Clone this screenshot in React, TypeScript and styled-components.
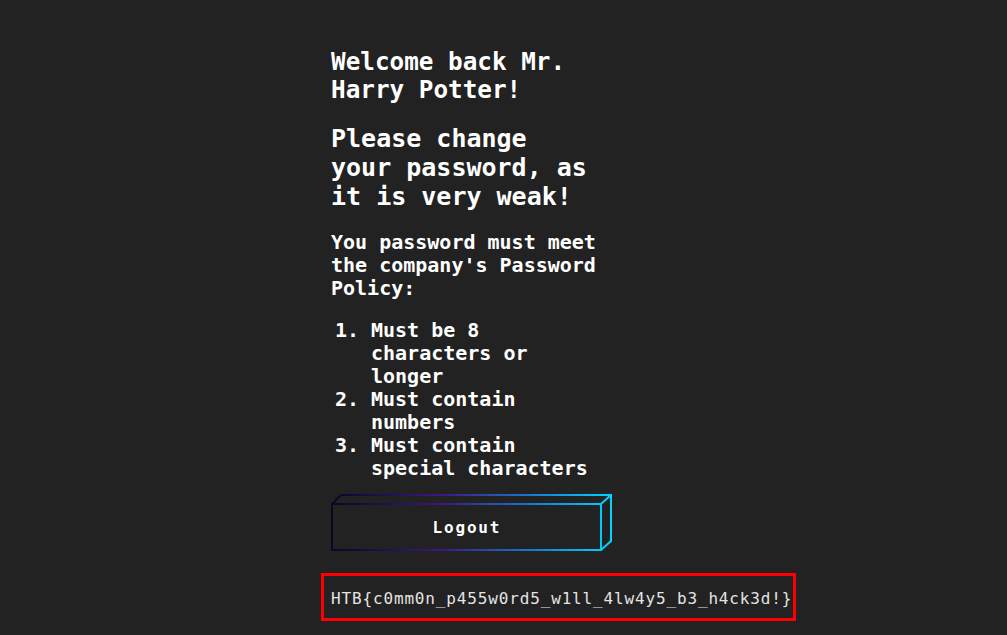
import React from "react";
import styled, { createGlobalStyle } from "styled-components";

const GlobalStyle = createGlobalStyle`
  html, body {
    margin: 0;
    padding: 0;
    background: #222222;
  }
  body {
    font-family: "DejaVu Sans Mono", "Liberation Mono", monospace;
    color: #ffffff;
  }
`;

const Page = styled.main`
  min-height: 635px;
  box-sizing: border-box;
  padding: 48px 0 0 331px;
`;

const Column = styled.section`
  width: 270px;
  display: flex;
  flex-direction: column;
  align-items: flex-start;
`;

const Title = styled.h1`
  margin: 0;
  font-size: 24.3px;
  line-height: 28px;
  font-weight: bold;
`;

const Subtitle = styled.h2`
  margin: 20px 0 0;
  font-size: 25px;
  line-height: 29px;
  font-weight: bold;
`;

const Text = styled.p`
  margin: 20px 0 0;
  font-size: 20px;
  line-height: 23px;
  font-weight: bold;
`;

const Rules = styled.ol`
  margin: 19px 0 0;
  padding: 0 0 0 40px;
  font-size: 20px;
  line-height: 23px;
  font-weight: bold;
`;

const Rule = styled.li``;

const LogoutButton = styled.button`
  position: relative;
  margin-top: 14px;
  width: 281px;
  height: 57px;
  padding: 10px 11px 0 0;
  background: transparent;
  border: none;
  cursor: pointer;
  display: flex;
  flex-direction: column;
`;

const Outline = styled.svg`
  position: absolute;
  inset: 0;
  width: 281px;
  height: 57px;
  overflow: visible;
`;

const Label = styled.span`
  position: relative;
  flex: 1;
  display: flex;
  align-items: center;
  justify-content: center;
  font-family: "DejaVu Sans Mono", monospace;
  font-weight: bold;
  font-size: 16px;
  letter-spacing: 1.8px;
  color: #ffffff;
  padding-left: 1.8px;
`;

const Flag = styled.div`
  margin: 22px 0 0 -10px;
  box-sizing: border-box;
  width: 475px;
  height: 48px;
  border: 3px solid #ff0000;
  padding: 2px 0 0 7px;
  display: flex;
  align-items: center;
  white-space: nowrap;
  font-family: "DejaVu Sans Mono", monospace;
  font-size: 16px;
  letter-spacing: 0.85px;
  color: #e4e4e4;
`;

function ButtonOutline() {
  return (
    <Outline viewBox="0 0 281 57" aria-hidden="true">
      <defs>
        <linearGradient id="btnGrad" x1="0" y1="0" x2="281" y2="0" gradientUnits="userSpaceOnUse">
          <stop offset="0" stopColor="#0a0624" />
          <stop offset="0.4" stopColor="#3a1a82" />
          <stop offset="0.7" stopColor="#1c74cc" />
          <stop offset="1" stopColor="#00d6ff" />
        </linearGradient>
      </defs>
      <g fill="none" stroke="url(#btnGrad)" strokeWidth="2" strokeLinejoin="miter">
        <rect x="1" y="10" width="269" height="46" />
        <polyline points="1,10 10,1 280,1 280,47 270,56" />
        <line x1="270" y1="10" x2="280" y2="1" />
      </g>
    </Outline>
  );
}

export default function App() {
  return (
    <>
      <GlobalStyle />
      <Page>
        <Column>
          <Title>Welcome back Mr. Harry Potter!</Title>
          <Subtitle>Please change your password, as it is very weak!</Subtitle>
          <Text>You password must meet the company's Password Policy:</Text>
          <Rules>
            <Rule>Must be 8 characters or longer</Rule>
            <Rule>Must contain numbers</Rule>
            <Rule>Must contain special characters</Rule>
          </Rules>
          <LogoutButton type="button">
            <ButtonOutline />
            <Label>Logout</Label>
          </LogoutButton>
          <Flag>HTB{"{"}c0mm0n_p455w0rd5_w1ll_4lw4y5_b3_h4ck3d!{"}"}</Flag>
        </Column>
      </Page>
    </>
  );
}
